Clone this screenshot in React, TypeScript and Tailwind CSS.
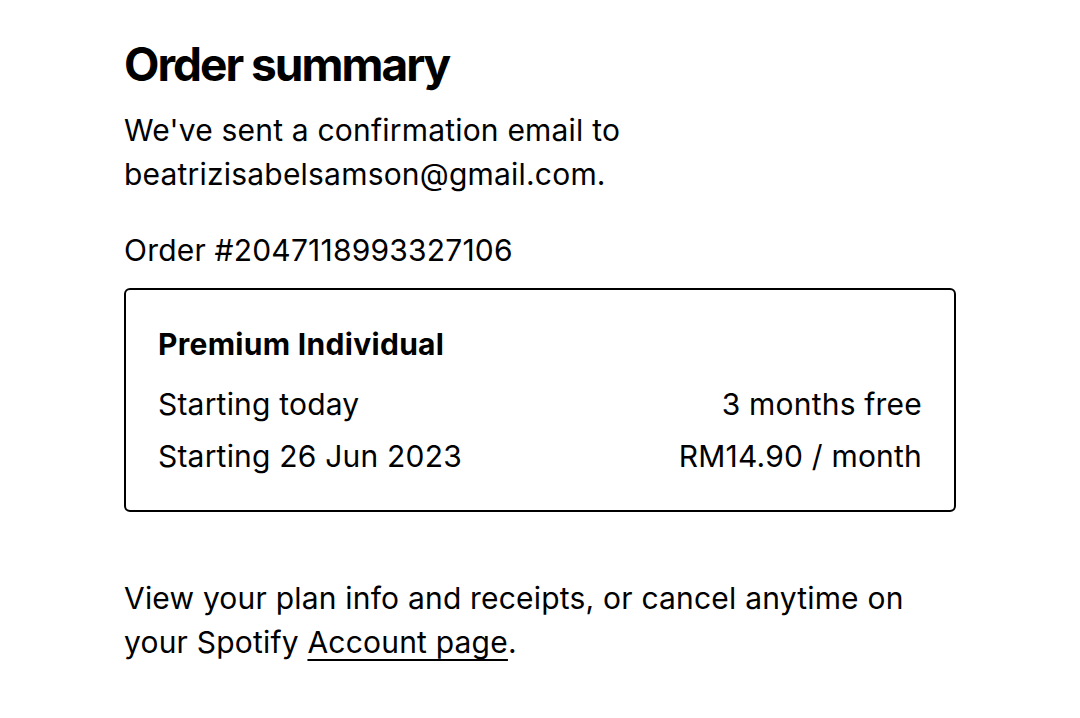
export default function App() {
  return (
    <main
      className="min-h-screen bg-white text-black"
      style={{ fontFamily: "Inter, 'Noto Sans', sans-serif" }}
    >
      <div className="w-[832px] ml-[124px] pt-[34px]">
        <h1 className="text-[46px] leading-[60px] font-bold tracking-[-2px]">
          Order summary
        </h1>
        <p className="mt-[14px] text-[30px] leading-[44px] tracking-[0.2px]">
          We've sent a confirmation email to
          <br />
          beatrizisabelsamson@gmail.com.
        </p>
        <p className="mt-[32px] text-[30px] leading-[44px] tracking-[0.2px]">
          Order #2047118993327106
        </p>

        <div className="mt-[16px] border-2 border-black rounded-[6px] px-[32px] pt-[34px] pb-[32px]">
          <h2 className="text-[30px] leading-[40px] font-bold tracking-[0.3px]">
            Premium Individual
          </h2>
          <div className="mt-[18px] flex flex-col gap-[8px] text-[30px] leading-[44px] tracking-[0.2px]">
            <div className="flex justify-between">
              <span>Starting today</span>
              <span>3 months free</span>
            </div>
            <div className="flex justify-between">
              <span>Starting 26 Jun 2023</span>
              <span>RM14.90 / month</span>
            </div>
          </div>
        </div>

        <p className="mt-[64px] text-[30px] leading-[44px] tracking-[0.2px]">
          View your plan info and receipts, or cancel anytime on
          <br />
          your Spotify{" "}
          <a
            href="#"
            className="underline decoration-[2px] underline-offset-[6px]"
          >
            Account page
          </a>
          .
        </p>
      </div>
    </main>
  );
}
